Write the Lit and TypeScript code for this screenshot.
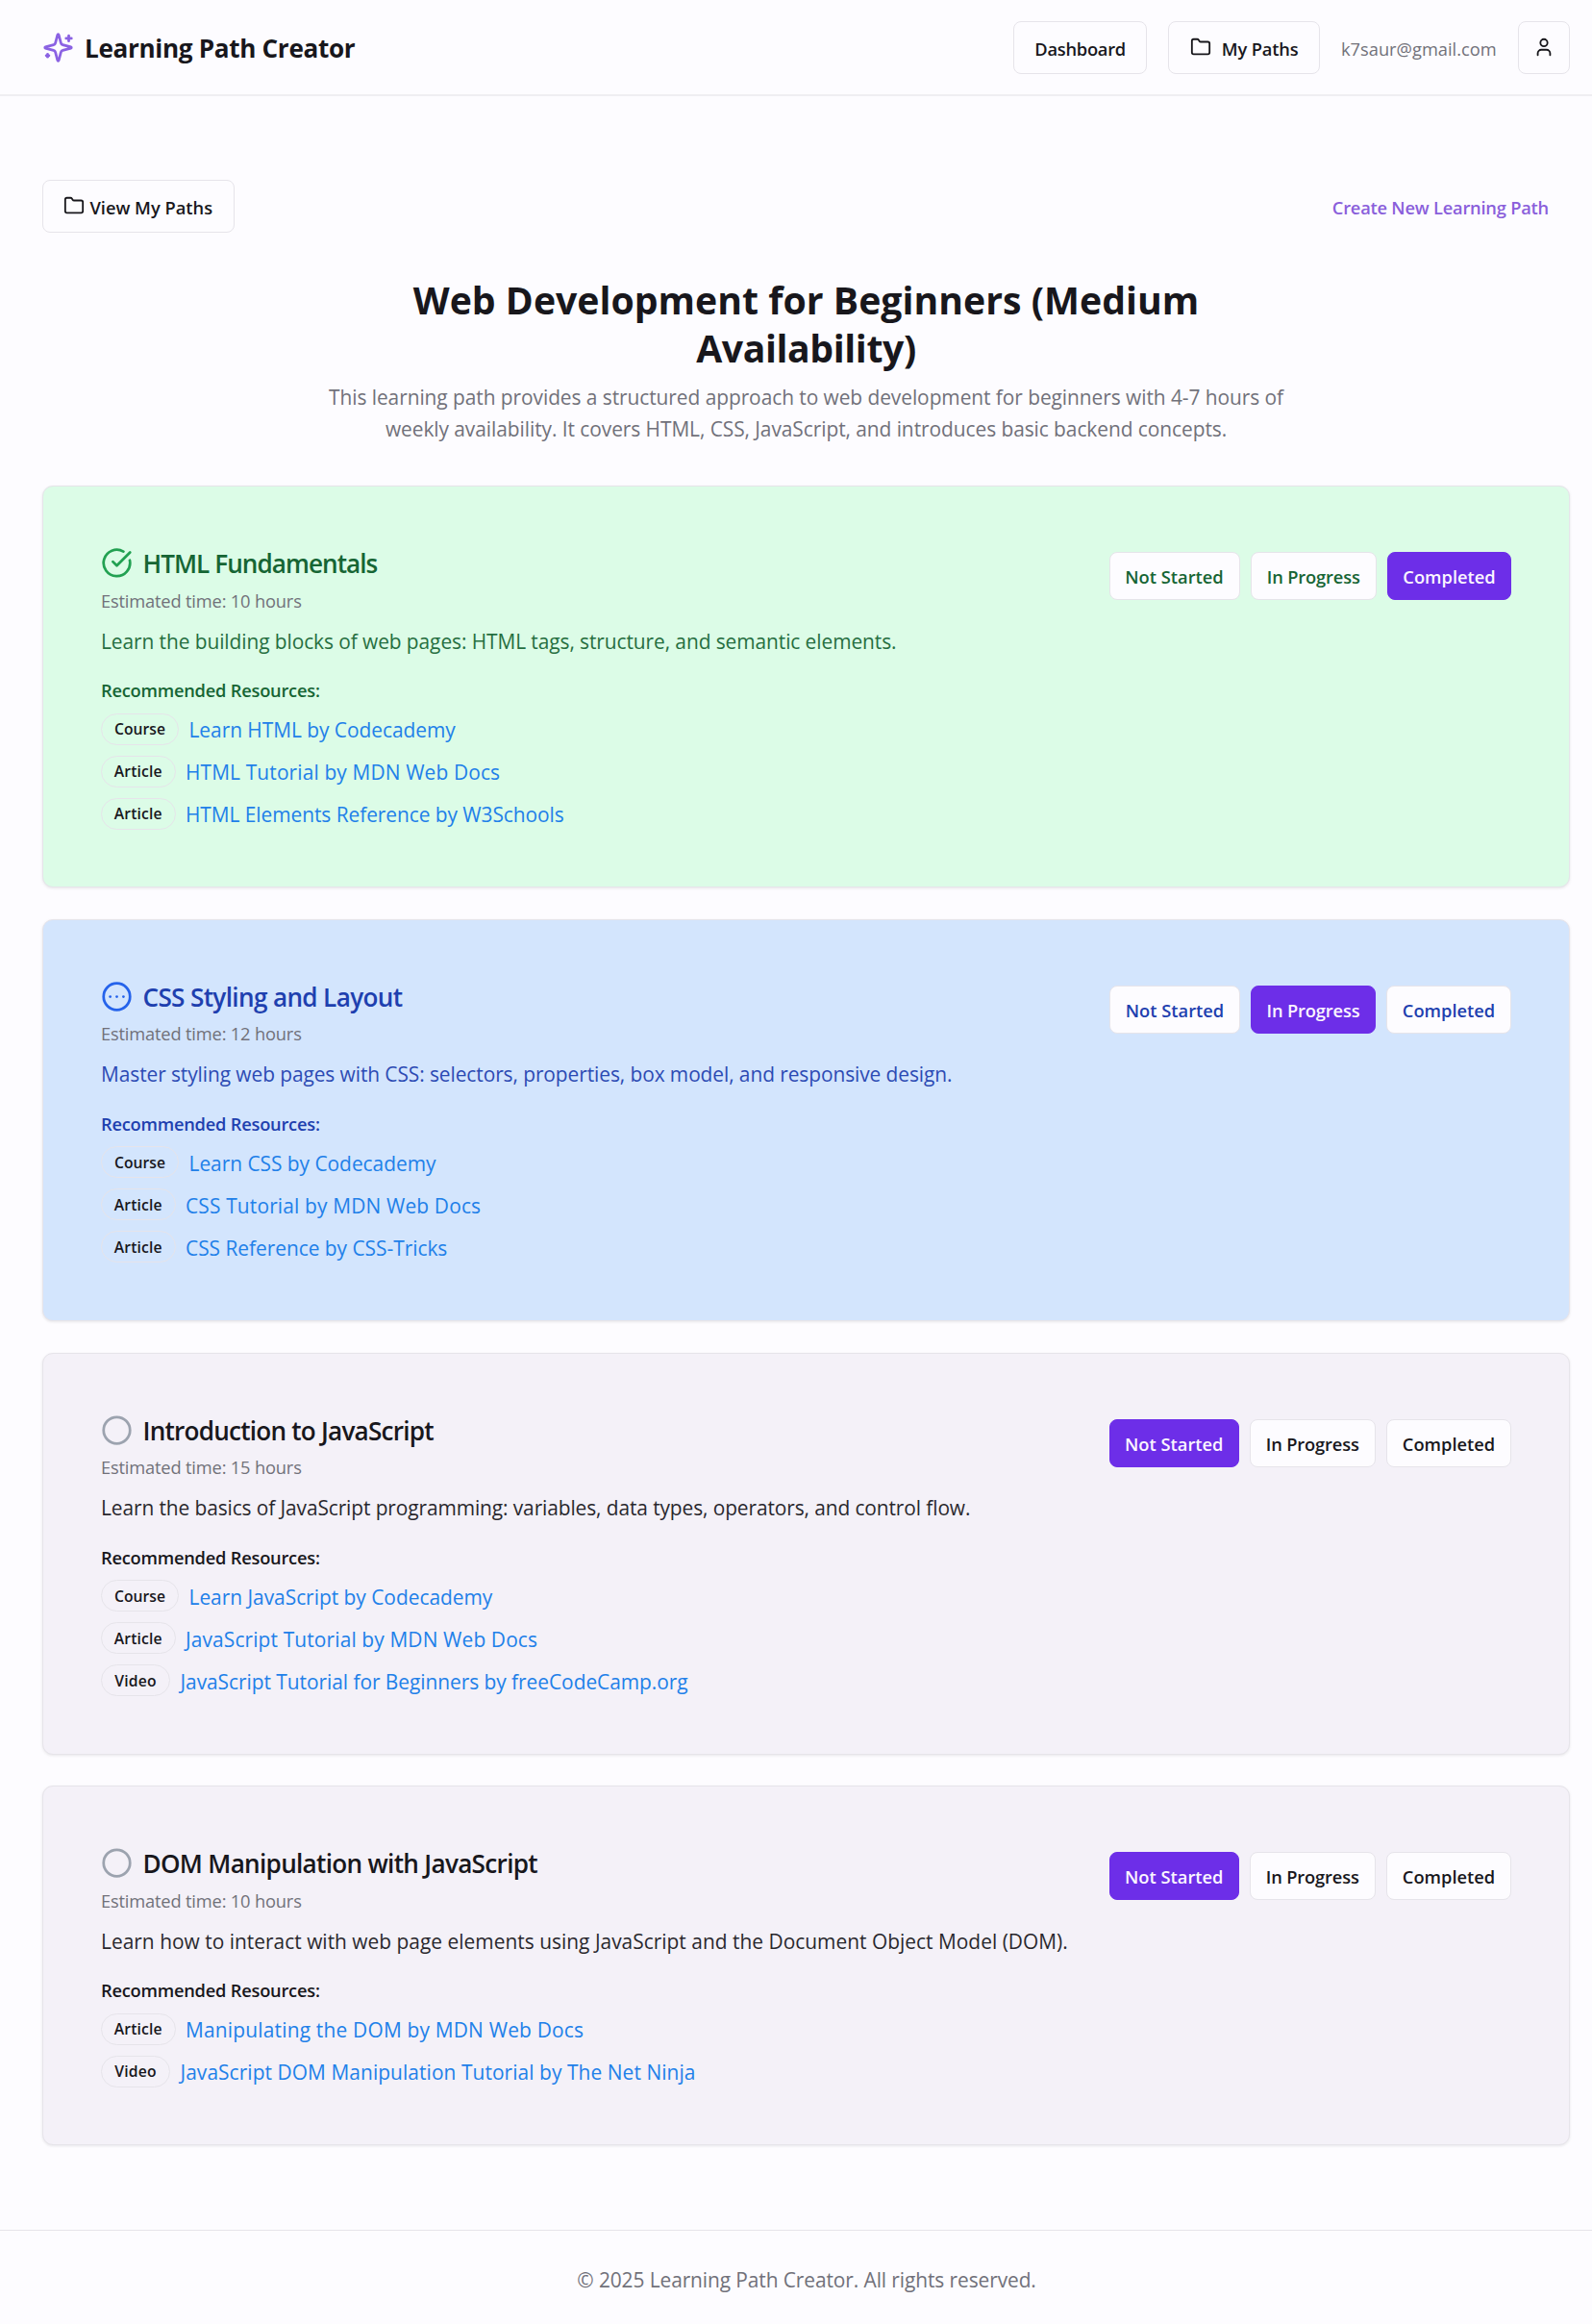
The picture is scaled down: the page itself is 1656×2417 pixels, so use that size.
import { LitElement, html, css, svg } from "lit";
import { customElement, property } from "lit/decorators.js";
import { classMap } from "lit/directives/class-map.js";
import { styleMap } from "lit/directives/style-map.js";

type Status = "Not Started" | "In Progress" | "Completed";

interface Resource {
  kind: "Course" | "Article" | "Video";
  label: string;
  tracking: number;
}

interface Module {
  title: string;
  titleTracking: number;
  hours: number;
  text: string;
  textTracking: number;
  status: Status;
  resources: Resource[];
}

const STATUSES: Status[] = ["Not Started", "In Progress", "Completed"];

const MODULES: Module[] = [
  {
    title: "HTML Fundamentals",
    titleTracking: -0.95,
    hours: 10,
    text: "Learn the building blocks of web pages: HTML tags, structure, and semantic elements.",
    textTracking: -0.075,
    status: "Completed",
    resources: [
      { kind: "Course", label: "Learn HTML by Codecademy", tracking: -0.03 },
      { kind: "Article", label: "HTML Tutorial by MDN Web Docs", tracking: 0.139 },
      { kind: "Article", label: "HTML Elements Reference by W3Schools", tracking: -0.05 },
    ],
  },
  {
    title: "CSS Styling and Layout",
    titleTracking: -0.65,
    hours: 12,
    text: "Master styling web pages with CSS: selectors, properties, box model, and responsive design.",
    textTracking: -0.075,
    status: "In Progress",
    resources: [
      { kind: "Course", label: "Learn CSS by Codecademy", tracking: -0.02 },
      { kind: "Article", label: "CSS Tutorial by MDN Web Docs", tracking: 0.163 },
      { kind: "Article", label: "CSS Reference by CSS-Tricks", tracking: -0.02 },
    ],
  },
  {
    title: "Introduction to JavaScript",
    titleTracking: -0.78,
    hours: 15,
    text: "Learn the basics of JavaScript programming: variables, data types, operators, and control flow.",
    textTracking: -0.097,
    status: "Not Started",
    resources: [
      { kind: "Course", label: "Learn JavaScript by Codecademy", tracking: -0.01 },
      { kind: "Article", label: "JavaScript Tutorial by MDN Web Docs", tracking: 0.136 },
      { kind: "Video", label: "JavaScript Tutorial for Beginners by freeCodeCamp.org", tracking: -0.037 },
    ],
  },
  {
    title: "DOM Manipulation with JavaScript",
    titleTracking: -0.7,
    hours: 10,
    text: "Learn how to interact with web page elements using JavaScript and the Document Object Model (DOM).",
    textTracking: 0.018,
    status: "Not Started",
    resources: [
      { kind: "Article", label: "Manipulating the DOM by MDN Web Docs", tracking: 0.2 },
      { kind: "Video", label: "JavaScript DOM Manipulation Tutorial by The Net Ninja", tracking: 0.077 },
    ],
  },
];

const icons = {
  sparkles: svg`<path d="M9.937 15.5A2 2 0 0 0 8.5 14.063l-6.135-1.582a.5.5 0 0 1 0-.962L8.5 9.936A2 2 0 0 0 9.937 8.5l1.582-6.135a.5.5 0 0 1 .963 0L14.063 8.5A2 2 0 0 0 15.5 9.937l6.135 1.581a.5.5 0 0 1 0 .964L15.5 14.063a2 2 0 0 0-1.437 1.437l-1.582 6.135a.5.5 0 0 1-.963 0z"/><path d="M20 3v4"/><path d="M22 5h-4"/><path d="M4 17v2"/><path d="M5 18H3"/>`,
  folder: svg`<path d="M20 20a2 2 0 0 0 2-2V8a2 2 0 0 0-2-2h-7.9a2 2 0 0 1-1.69-.9L9.6 3.9A2 2 0 0 0 7.93 3H4a2 2 0 0 0-2 2v13a2 2 0 0 0 2 2Z"/>`,
  user: svg`<path d="M19 21v-2a4 4 0 0 0-4-4H9a4 4 0 0 0-4 4v2"/><circle cx="12" cy="7" r="4"/>`,
  "Completed": svg`<path d="M21.801 10A10 10 0 1 1 17 3.335"/><path d="m9 11 3 3L22 4"/>`,
  "In Progress": svg`<circle cx="12" cy="12" r="10"/><path d="M17 12h.01"/><path d="M12 12h.01"/><path d="M7 12h.01"/>`,
  "Not Started": svg`<circle cx="12" cy="12" r="10"/>`,
};

const icon = (name: keyof typeof icons, cls: string) => html`
  <svg class=${"icon " + cls} viewBox="0 0 24 24" fill="none" stroke="currentColor"
    stroke-width="2" stroke-linecap="round" stroke-linejoin="round">${icons[name]}</svg>`;

const base = css`
  * { box-sizing: border-box; margin: 0; padding: 0; }
  .icon { display: block; flex: none; }
  .btn {
    display: flex;
    align-items: center;
    justify-content: center;
    border: 1px solid #e6e4ea;
    background: #fdfcff;
    color: #18171c;
    font: 600 18.29px/27px "Open Sans", sans-serif;
    white-space: nowrap;
    border-radius: 8px;
  }
`;

@customElement("module-card")
export class ModuleCard extends LitElement {
  @property({ attribute: false }) module!: Module;

  static styles = [
    base,
    css`
      :host { display: block; }
      .card {
        display: flex;
        justify-content: space-between;
        align-items: flex-start;
        padding: 62px 60px 0;
        height: 418px;
        border: 1px solid #e6e4ea;
        border-radius: 11px;
        background: #f4f1f8;
        color: #18171c;
        box-shadow: 0 1px 3px rgba(0, 0, 0, 0.09);
      }
      .card.short { height: 374px; }
      .card.completed { background: #dcfce7; color: #166534; }
      .card.in-progress { background: #d3e5fd; color: #1e40af; }
      .heading { display: flex; align-items: center; gap: 10.5px; height: 35px; }
      h2 { font-size: 26.13px; font-weight: 600; line-height: 38px; padding-top: 1px; white-space: nowrap; }
      .status-icon { width: 33px; height: 33px; color: #9ca3af; }
      .completed .status-icon { color: #22a152; }
      .in-progress .status-icon { color: #2563eb; }
      .time { font-size: 18.29px; line-height: 27.5px; letter-spacing: -0.177px; color: #71717a; margin-top: 7.5px; }
      .text { font-size: 20.9px; line-height: 33px; margin-top: 12.5px; white-space: nowrap; opacity: 0.93; }
      h3 { font-size: 18.29px; font-weight: 600; line-height: 27.5px; letter-spacing: -0.232px; margin-top: 20.5px; }
      ul { list-style: none; display: flex; flex-direction: column; gap: 11px; margin-top: 10px; }
      li { display: flex; align-items: center; gap: 10.5px; height: 33px; }
      .badge {
        display: flex;
        align-items: center;
        justify-content: center;
        height: 33px;
        width: 81px;
        border: 1px solid #e6e4ea;
        border-radius: 17px;
        font-size: 15.68px;
        font-weight: 600;
        line-height: 22px;
        color: #18171c;
      }
      .badge.article { width: 77.5px; letter-spacing: 0.15px; }
      .badge.video { width: 72px; letter-spacing: 0.2px; }
      .link { font-size: 20.9px; line-height: 33px; color: #2180e9; white-space: nowrap; padding-top: 3px; }
      .actions { display: flex; gap: 11px; margin-top: 6px; }
      .btn { height: 50px; color: inherit; padding-top: 1px; }
      .not-started-btn { width: 136px; }
      .in-progress-btn { width: 131.5px; letter-spacing: -0.15px; }
      .completed-btn { width: 130px; }
      .btn.active { background: #6d2ee8; border-color: #6d2ee8; color: #fbf5ff; }
      .not-started-btn.active { width: 134.5px; }
      .in-progress-btn.active { width: 130px; }
      .completed-btn.active { width: 129px; }
    `,
  ];

  render() {
    const m = this.module;
    const slug = (s: string) => s.toLowerCase().replace(" ", "-");
    return html`
      <section class=${classMap({ card: true, [slug(m.status)]: true, short: m.resources.length < 3 })}>
        <div>
          <div class="heading">
            ${icon(m.status, "status-icon")}
            <h2 style=${styleMap({ letterSpacing: `${m.titleTracking}px` })}>${m.title}</h2>
          </div>
          <p class="time">Estimated time: ${m.hours} hours</p>
          <p class="text" style=${styleMap({ letterSpacing: `${m.textTracking}px` })}>${m.text}</p>
          <h3>Recommended Resources:</h3>
          <ul>
            ${m.resources.map(
              (r) => html`<li>
                <span class=${"badge " + r.kind.toLowerCase()}>${r.kind}</span>
                <a class="link" style=${styleMap({ letterSpacing: `${r.tracking}px` })}>${r.label}</a>
              </li>`
            )}
          </ul>
        </div>
        <div class="actions">
          ${STATUSES.map(
            (s) => html`<button
              class=${classMap({ btn: true, [slug(s) + "-btn"]: true, active: s === m.status })}>${s}</button>`
          )}
        </div>
      </section>
    `;
  }
}

@customElement("app-root")
export class AppRoot extends LitElement {
  static styles = [
    base,
    css`
      :host {
        display: block;
        min-height: 2417px;
        background: #fdfcff;
        font-family: "Open Sans", sans-serif;
        color: #18171c;
      }
      header {
        display: flex;
        justify-content: space-between;
        align-items: center;
        height: 100px;
        padding: 0 23px 0 44px;
        border-bottom: 2px solid #efeef2;
      }
      .brand { display: flex; align-items: center; gap: 11px; }
      .brand h1 { font-size: 26.13px; font-weight: 700; line-height: 38px; letter-spacing: -0.33px; padding-top: 2px; }
      .logo { width: 33px; height: 33px; color: #8b62e3; }
      nav { display: flex; align-items: center; gap: 21.8px; padding-top: 1px; }
      .btn { height: 55px; padding-top: 1px; }
      .dashboard { width: 139.5px; letter-spacing: -0.25px; }
      .paths { width: 158px; letter-spacing: -0.13px; gap: 11px; }
      .folder { width: 22px; height: 22px; margin-top: -3px; }
      .user { width: 54.5px; }
      .person { width: 22px; height: 22px; margin-top: -2px; }
      .email { font-size: 18.29px; line-height: 27px; color: #71717a; padding-top: 1px; }
      main { padding: 87px 23px 0 44px; }
      .toolbar { display: flex; justify-content: space-between; align-items: center; }
      .view { width: 199.5px; gap: 5px; }
      .create {
        font-size: 18.29px;
        font-weight: 600;
        line-height: 27px;
        letter-spacing: -0.22px;
        color: #8a5fdb;
        padding: 1px 22px 0;
      }
      .intro { display: flex; flex-direction: column; align-items: center; text-align: center; margin-top: 45px; white-space: nowrap; }
      .intro h2 { font-size: 39.19px; font-weight: 700; line-height: 49.5px; letter-spacing: 0.03px; }
      .intro .second { letter-spacing: -0.4px; }
      .intro p { font-size: 20.9px; line-height: 33px; letter-spacing: -0.055px; color: #71717a; margin-top: 11px; }
      .list { display: flex; flex-direction: column; gap: 32.8px; margin-top: 42px; }
      footer {
        display: flex;
        justify-content: center;
        margin-top: 88px;
        padding: 35px 22px 0 44px;
        border-top: 1px solid #e6e4ea;
        font-size: 20.9px;
        line-height: 33px;
        letter-spacing: -0.085px;
        color: #71717a;
      }
    `,
  ];

  render() {
    return html`
      <header>
        <div class="brand">
          ${icon("sparkles", "logo")}
          <h1>Learning Path Creator</h1>
        </div>
        <nav>
          <button class="btn dashboard">Dashboard</button>
          <button class="btn paths">${icon("folder", "folder")}<span>My Paths</span></button>
          <span class="email">k7saur@gmail.com</span>
          <button class="btn user">${icon("user", "person")}</button>
        </nav>
      </header>
      <main>
        <div class="toolbar">
          <button class="btn view">${icon("folder", "folder")}<span>View My Paths</span></button>
          <a class="create">Create New Learning Path</a>
        </div>
        <div class="intro">
          <h2>Web Development for Beginners (Medium<br /><span class="second">Availability)</span></h2>
          <p>
            This learning path provides a structured approach to web development for beginners with 4-7 hours of<br />weekly
            availability. It covers HTML, CSS, JavaScript, and introduces basic backend concepts.
          </p>
        </div>
        <div class="list">${MODULES.map((m) => html`<module-card .module=${m}></module-card>`)}</div>
      </main>
      <footer>© 2025 Learning Path Creator. All rights reserved.</footer>
    `;
  }
}
